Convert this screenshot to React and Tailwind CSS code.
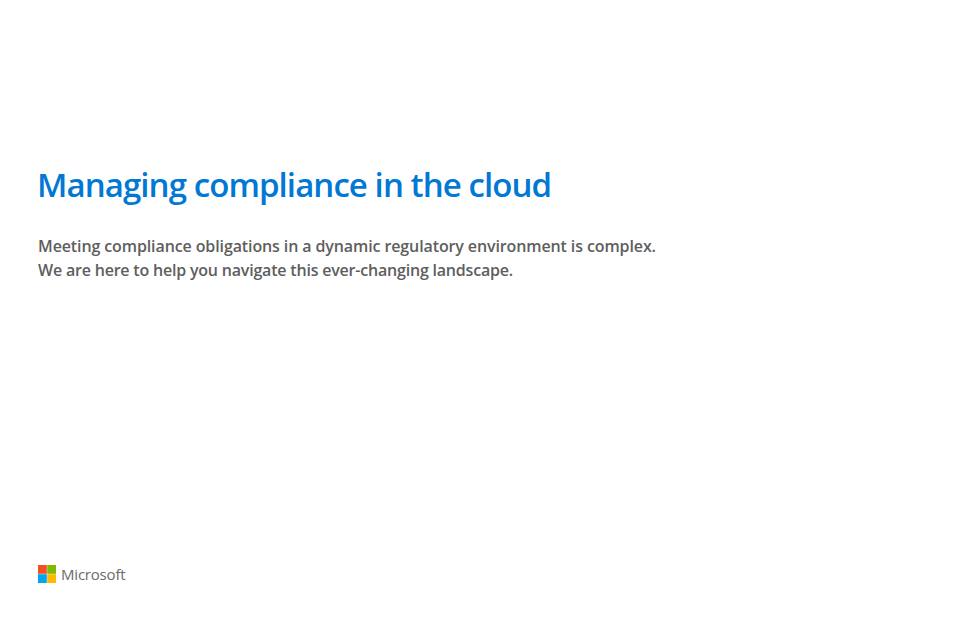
export default function App() {
  return (
    <div className="min-h-[621px] bg-white flex flex-col pl-[38px] font-['Open_Sans',sans-serif]">
      <h1 className="mt-[162px] -ml-px text-[33px] leading-[46px] font-semibold tracking-[-0.92px] text-[#0078d4]">
        Managing compliance in the cloud
      </h1>
      <p className="mt-[26px] text-[16px] leading-[24px] font-semibold tracking-[-0.11px] text-[#5e5e5e]">
        Meeting compliance obligations in a dynamic regulatory environment is complex.
        <br />
        <span className="tracking-[-0.2px]">We are here to help you navigate this ever-changing landscape.</span>
      </p>
      <div className="mt-[283px] flex items-center gap-[5px]">
        <svg width="18" height="18" viewBox="0 0 18 18">
          <rect x="0" y="0" width="8.8" height="8.8" fill="#f25022" />
          <rect x="9.2" y="0" width="8.8" height="8.8" fill="#7fba00" />
          <rect x="0" y="9.2" width="8.8" height="8.8" fill="#00a4ef" />
          <rect x="9.2" y="9.2" width="8.8" height="8.8" fill="#ffb900" />
        </svg>
        <span className="text-[15px] leading-[18px] font-medium tracking-[-0.2px] text-[#6b6b6b]">Microsoft</span>
      </div>
    </div>
  );
}
